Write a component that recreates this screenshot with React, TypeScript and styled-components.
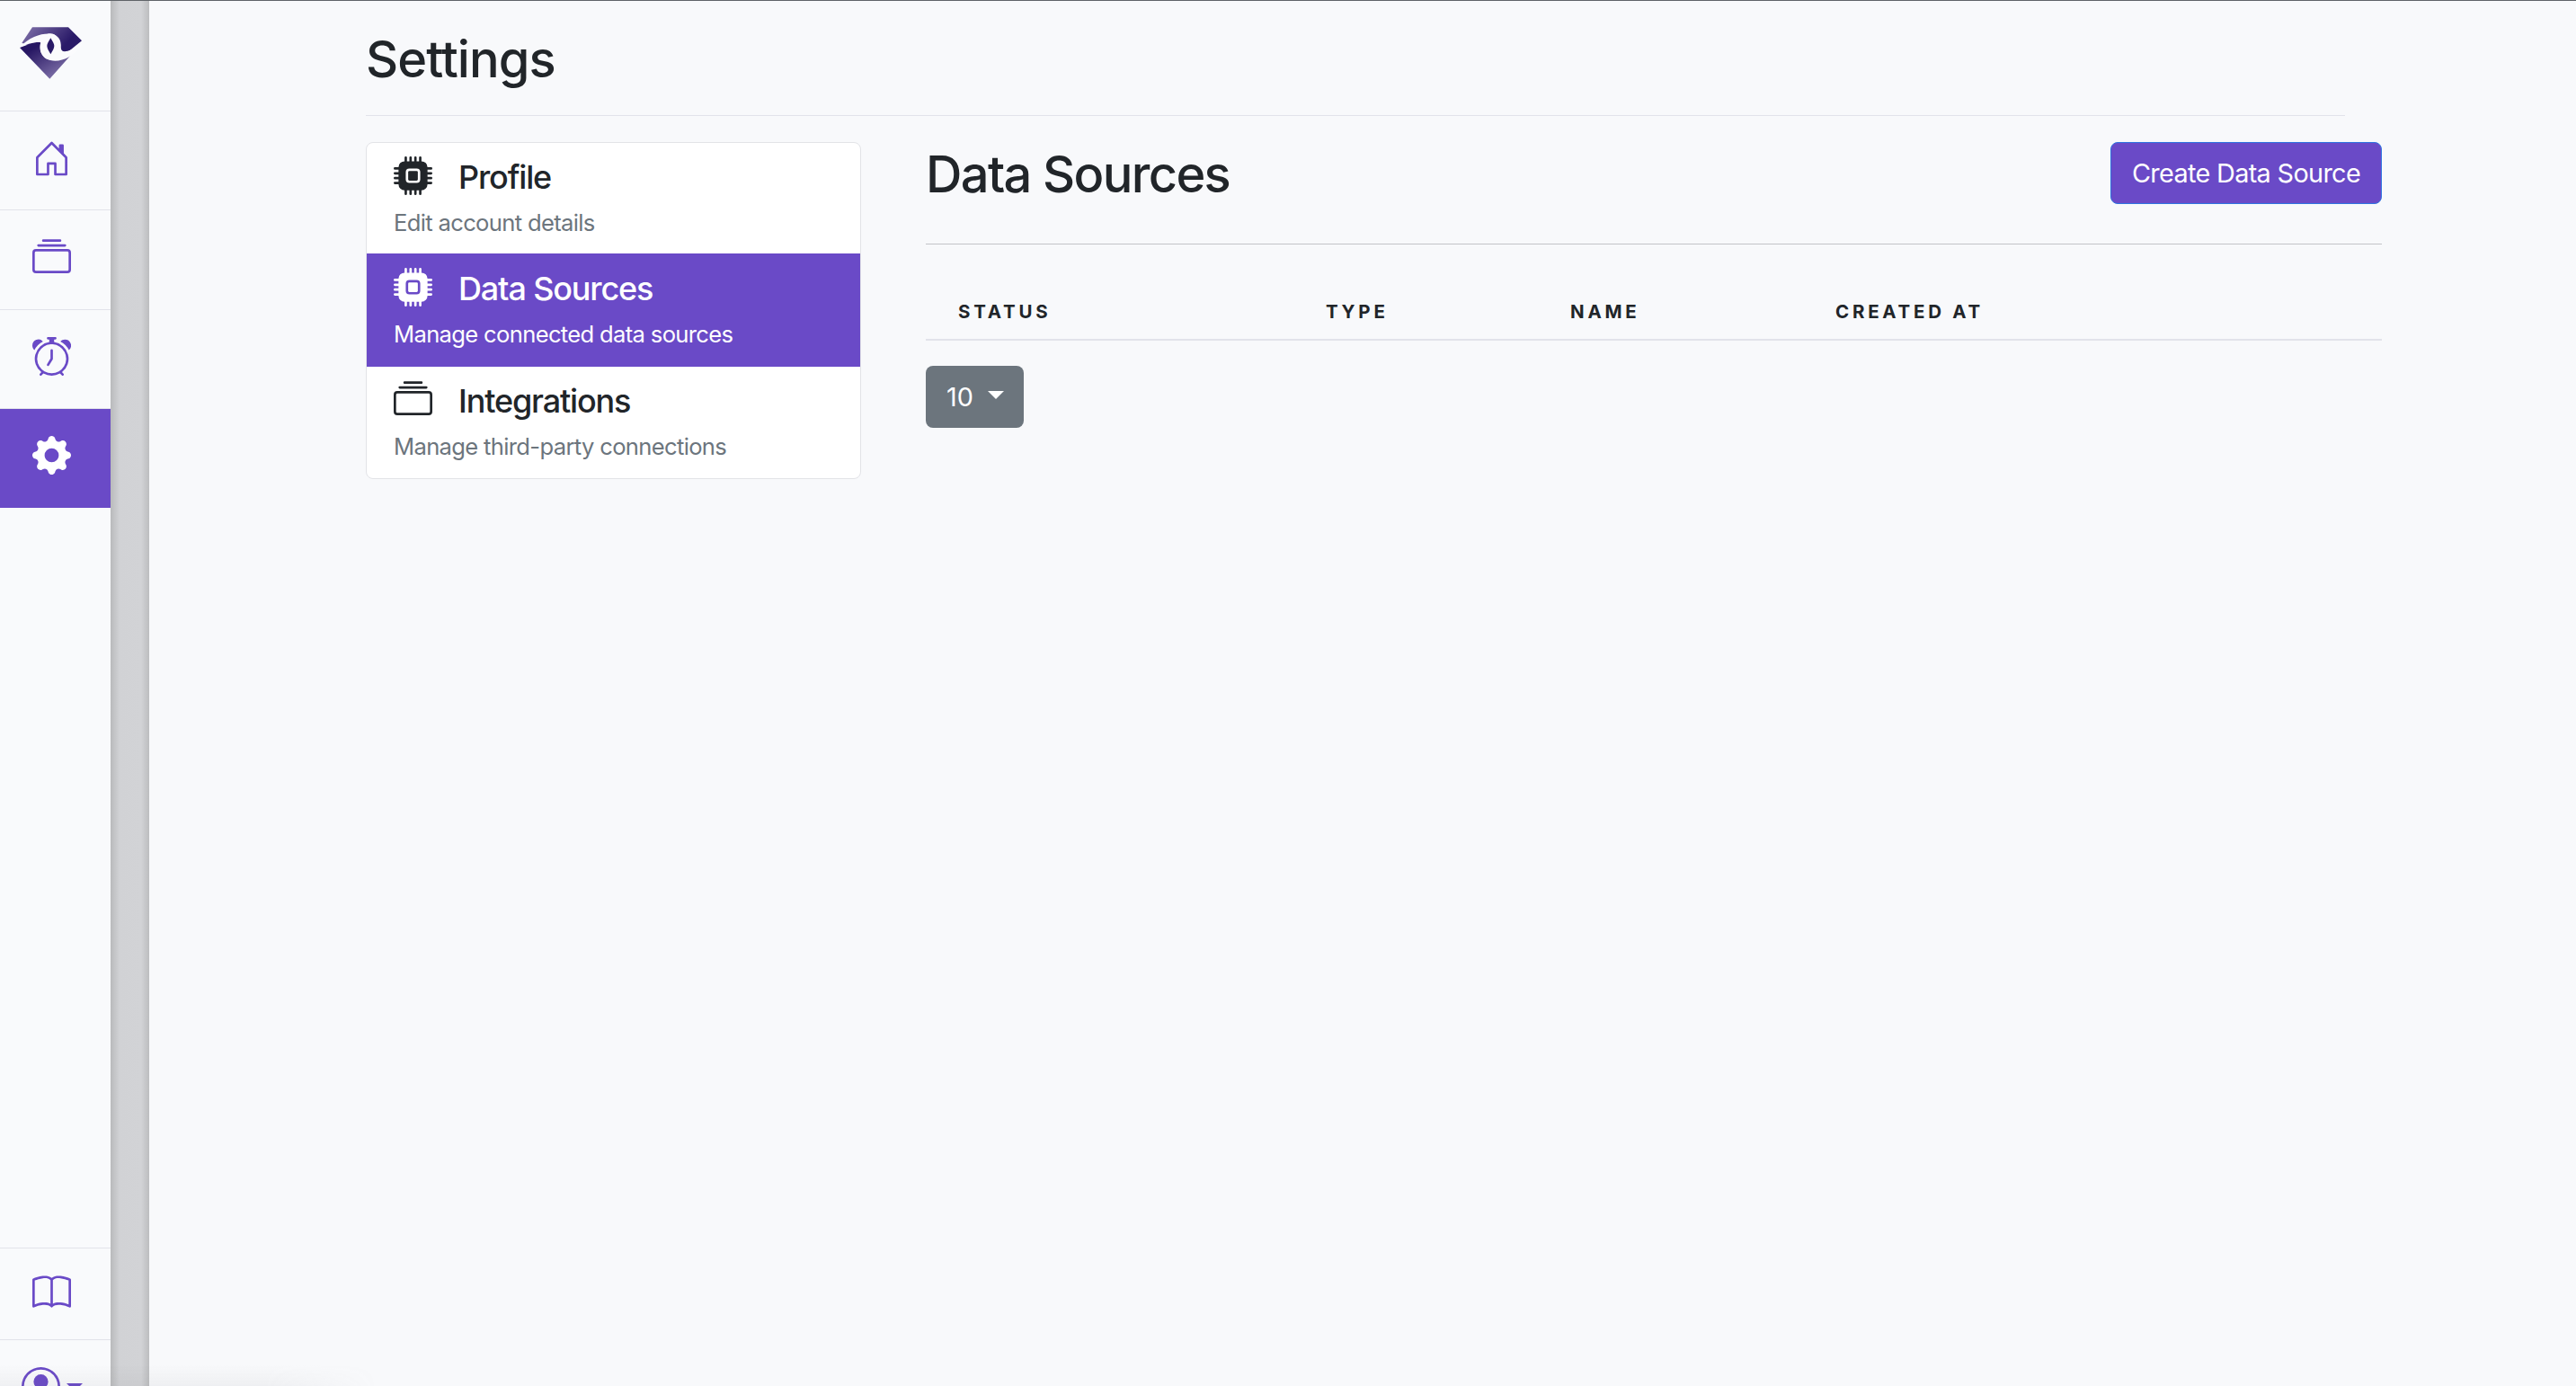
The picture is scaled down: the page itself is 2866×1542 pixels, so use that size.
import React from 'react';
import styled, { createGlobalStyle } from 'styled-components';
import {
  BsAlarm,
  BsBook,
  BsCollection,
  BsCpuFill,
  BsGearFill,
  BsHouseDoor,
  BsPersonCircle,
} from 'react-icons/bs';

const PURPLE = '#6a4ac7';
const INK = '#212529';

const GlobalStyle = createGlobalStyle`
  html, body {
    margin: 0;
    height: 100%;
    overflow: hidden;
    background: #f8f9fb;
    font-family: Inter, "Liberation Sans", sans-serif;
    color: ${INK};
  }
`;

const Shell = styled.div`
  display: flex;
  height: 100vh;
  border-top: 1px solid #5f6368;
  box-sizing: border-box;
  overflow: hidden;
`;

const Sidebar = styled.nav`
  flex: 0 0 123px;
  height: calc(100vh + 50px);
  display: flex;
  flex-direction: column;
  background: #f9fafc;
`;

const LogoCell = styled.div`
  height: 123px;
  box-sizing: border-box;
  padding: 29px 0 0 22px;
  border-bottom: 1px solid #e2e3ea;
`;

const SideItem = styled.a<{ $active?: boolean; $short?: boolean }>`
  height: ${(p) => (p.$short ? 102 : 110.25)}px;
  box-sizing: border-box;
  display: flex;
  align-items: center;
  padding: 0 0 ${(p) => (p.$short ? 2 : 5)}px 36px;
  font-size: 43px;
  color: ${(p) => (p.$active ? '#fff' : PURPLE)};
  background: ${(p) => (p.$active ? PURPLE : 'transparent')};
  border-bottom: 1px solid ${(p) => (p.$active ? PURPLE : '#e2e3ea')};
`;

const SideBottom = styled.div`
  margin-top: auto;
  border-top: 1px solid #e2e3ea;
`;

const AvatarCell = styled.div`
  height: 102px;
  display: flex;
  align-items: center;
  padding-left: 24px;
  gap: 7px;
  font-size: 43px;
  color: ${PURPLE};
`;

const AvatarCaret = styled.span`
  width: 0;
  height: 0;
  margin-top: 2px;
  border-left: 9px solid transparent;
  border-right: 9px solid transparent;
  border-top: 9px solid ${PURPLE};
`;

const Gutter = styled.div`
  flex: 0 0 43px;
  background: linear-gradient(90deg, #b9babc 0, #d1d2d5 10px, #d2d3d6 34px, #bcbdbf 43px);
`;

const Main = styled.main`
  flex: 1;
  padding-left: 241px;
`;

const BottomHaze = styled.div`
  position: fixed;
  left: 0;
  bottom: 0;
  width: 420px;
  height: 24px;
  pointer-events: none;
  background: linear-gradient(180deg, rgba(120, 120, 125, 0), rgba(120, 120, 125, 0.07));
  -webkit-mask-image: linear-gradient(90deg, #000 70%, transparent);
`;

const PageHead = styled.header`
  width: 2202px;
  height: 128px;
  box-sizing: border-box;
  border-bottom: 1px solid #e2e3ea;
  padding-top: 31px;
`;

const PageTitle = styled.h1`
  margin: 0;
  font-size: 56px;
  line-height: 68px;
  font-weight: 500;
  letter-spacing: -0.95px;
`;

const Columns = styled.div`
  display: flex;
  padding-top: 29px;
`;

const SettingsNav = styled.div`
  flex: 0 0 551px;
  height: 375px;
  box-sizing: border-box;
  background: #fff;
  border: 1px solid #e2e3e7;
  border-radius: 8px;
  overflow: hidden;
`;

const NavItem = styled.a<{ $active?: boolean }>`
  display: block;
  height: ${(p) => (p.$active ? 126 : 123)}px;
  box-sizing: border-box;
  padding: ${(p) => (p.$active ? 16 : 15)}px 0 0 31px;
  margin: 0 -1px;
  background: ${(p) => (p.$active ? PURPLE : 'transparent')};
  color: ${(p) => (p.$active ? '#fff' : INK)};
`;

const NavTitleRow = styled.div`
  display: flex;
  align-items: center;
  gap: 29px;
  font-size: 43px;
  height: 43px;
`;

const NavTitle = styled.span`
  padding-top: 4px;
  font-size: 36px;
  line-height: 43px;
  font-weight: 500;
  letter-spacing: -1.15px;
`;

const NavSub = styled.div<{ $active?: boolean }>`
  margin-top: 14px;
  font-size: 25.6px;
  line-height: 34px;
  letter-spacing: -0.67px;
  color: ${(p) => (p.$active ? '#fff' : '#6c757d')};
`;

const Panel = styled.section`
  margin-left: 72px;
  width: 1620px;
`;

const PanelHead = styled.div`
  height: 114px;
  box-sizing: border-box;
  border-bottom: 1px solid #c2c3c7;
  display: flex;
  justify-content: space-between;
  align-items: flex-start;
`;

const PanelTitle = styled.h2`
  margin: 0;
  padding-top: 2px;
  font-size: 56px;
  line-height: 68px;
  font-weight: 500;
  letter-spacing: -1.65px;
`;

const PrimaryButton = styled.button`
  height: 69px;
  width: 302px;
  padding: 0;
  background: ${PURPLE};
  border: 1px solid #2f74e0;
  border-radius: 8px;
  color: #fff;
  font-family: inherit;
  font-size: 28.8px;
  font-weight: 400;
  letter-spacing: -0.65px;
`;

const HeaderRow = styled.div`
  display: grid;
  grid-template-columns: 409px 272px 295px 1fr;
  height: 107px;
  box-sizing: border-box;
  padding: 61px 0 0 36px;
  border-bottom: 2px solid #e2e3ea;
`;

const HeaderCell = styled.div`
  font-size: 20.5px;
  line-height: 28px;
  font-weight: 700;
  letter-spacing: 3.75px;
`;

const PageSize = styled.button`
  margin-top: 28px;
  width: 109px;
  height: 69px;
  display: flex;
  align-items: center;
  padding: 0 0 0 23px;
  gap: 16px;
  background: #6c757d;
  border: none;
  border-radius: 8px;
  color: #fff;
  font-family: inherit;
  font-size: 28.8px;
`;

const Caret = styled.span`
  width: 0;
  height: 0;
  margin-bottom: 4px;
  border-left: 9px solid transparent;
  border-right: 9px solid transparent;
  border-top: 9px solid #fff;
`;

const Logo = () => (
  <svg width="70" height="58" viewBox="38 60 210 172" aria-hidden="true">
    <defs>
      <linearGradient id="logoTop" x1="0" y1="0" x2="1" y2="0.4">
        <stop offset="0" stopColor="#8475ad" />
        <stop offset="0.85" stopColor="#2a1a68" />
      </linearGradient>
      <linearGradient id="logoBottom" x1="0" y1="0.1" x2="0.8" y2="1">
        <stop offset="0.2" stopColor="#271763" />
        <stop offset="1" stopColor="#8a7cb2" />
      </linearGradient>
    </defs>
    <path d="M80 60H200L245 105L190 150L140 150L45 112Z" fill="url(#logoTop)" />
    <path d="M38 128L100 105L150 170L220 140L138 232Z" fill="url(#logoBottom)" />
    <path
      d="M38 127C70 92 110 80 140 82C168 84 177 105 175 125C175 148 195 148 250 112C218 162 172 178 140 170C112 163 100 140 108 110C90 108 60 115 38 127Z"
      fill="#fbfbfd"
    />
    <ellipse cx="140" cy="125" rx="34" ry="44" fill="#fbfbfd" />
    <path d="M141 96C148 108 153 115 153 122C153 130 148 138 141 150C134 138 129 130 129 122C129 115 134 108 141 96Z" fill="#2a1a68" />
  </svg>
);

const SECTIONS = [
  { title: 'Profile', sub: 'Edit account details', Icon: BsCpuFill },
  { title: 'Data Sources', sub: 'Manage connected data sources', Icon: BsCpuFill, active: true },
  { title: 'Integrations', sub: 'Manage third-party connections', Icon: BsCollection },
];

const COLUMNS = ['Status', 'Type', 'Name', 'Created at'];

export default function App() {
  return (
    <>
      <GlobalStyle />
      <Shell>
        <Sidebar>
          <LogoCell>
            <Logo />
          </LogoCell>
          <SideItem><BsHouseDoor /></SideItem>
          <SideItem><BsCollection /></SideItem>
          <SideItem><BsAlarm /></SideItem>
          <SideItem $active><BsGearFill /></SideItem>
          <SideBottom>
            <SideItem $short><BsBook /></SideItem>
            <AvatarCell>
              <BsPersonCircle />
              <AvatarCaret />
            </AvatarCell>
          </SideBottom>
        </Sidebar>
        <Gutter />
        <Main>
          <PageHead>
            <PageTitle>Settings</PageTitle>
          </PageHead>
          <Columns>
            <SettingsNav>
              {SECTIONS.map((s) => (
                <NavItem key={s.title} $active={s.active}>
                  <NavTitleRow>
                    <s.Icon />
                    <NavTitle>{s.title}</NavTitle>
                  </NavTitleRow>
                  <NavSub $active={s.active}>{s.sub}</NavSub>
                </NavItem>
              ))}
            </SettingsNav>
            <Panel>
              <PanelHead>
                <PanelTitle>Data Sources</PanelTitle>
                <PrimaryButton>Create Data Source</PrimaryButton>
              </PanelHead>
              <HeaderRow>
                {COLUMNS.map((c) => (
                  <HeaderCell key={c}>{c.toUpperCase()}</HeaderCell>
                ))}
              </HeaderRow>
              <PageSize>
                10
                <Caret />
              </PageSize>
            </Panel>
          </Columns>
        </Main>
      </Shell>
      <BottomHaze />
    </>
  );
}
